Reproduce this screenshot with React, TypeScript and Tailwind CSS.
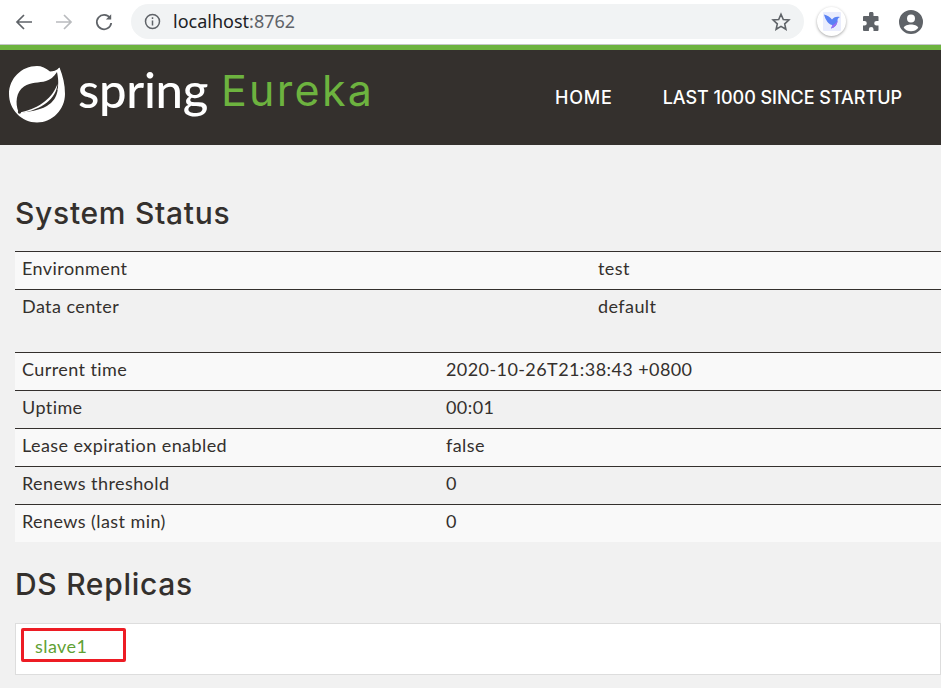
import React from "react";

const body = { fontFamily: '"Lato", "Noto Sans", sans-serif' };
const head = { fontFamily: 'Inter, "Noto Sans", sans-serif' };

function Row({ a, b, shaded, col }: { a: string; b: string; shaded?: boolean; col: string }) {
  return (
    <div className={`flex h-[38px] items-center border-t border-[#34302d] pb-[4px] ${shaded ? "bg-[#f9f9f9]" : ""}`}>
      <div className={`pl-[7px] ${col}`}>{a}</div>
      <div>{b}</div>
    </div>
  );
}

function Leaf() {
  return (
    <svg width="58" height="58" viewBox="8 8 58 58" className="shrink-0">
      <path
        d="M37 9C21.500 9 9 21.500 9 37s12.500 28.500 28 28.500S65 52.500 65 37c0-9.500-2-18-5.500-26.500-3 3-6.500 4-9.500 4C46 11 41.500 9 37 9Z"
        fill="#fff"
      />
      <path
        d="M18.500 55C15 46 16 35 24 29.500c7-4.500 15-3.500 22-5.500 4-1.200 8-4 11-9 2 9 2 19-2 26-5 8-14 13-34.500 14.500Z"
        fill="#34302d"
      />
      <path d="M20 55.500C36 52 51 44 57.500 27c-1.500 15-15 25-37 29.500Z" fill="#fff" />
      <path d="M59.500 11c1.500 6 1.800 12 0 22l-2 0c2-8 2-14 .5-21Z" fill="#fff" />
      <circle cx="19.500" cy="55" r="1.700" fill="#34302d" />
    </svg>
  );
}

export default function App() {
  return (
    <div className="relative flex h-[688px] w-[941px] flex-col overflow-hidden bg-[#f1f1f1] text-[#34302d]" style={body}>
      <div className="flex h-[45px] shrink-0 items-center border-b border-[#c4c6c8] bg-white pb-[1px]">
        <div className="ml-[14px] flex items-center gap-[20px]">
          <svg width="20" height="20" viewBox="0 0 20 20" fill="none" stroke="#5f6368" strokeWidth="1.7">
            <path d="M18 10H3M10 3l-7 7 7 7" />
          </svg>
          <svg width="20" height="20" viewBox="0 0 20 20" fill="none" stroke="#b9bbbe" strokeWidth="1.7">
            <path d="M2 10h15M10 3l7 7-7 7" />
          </svg>
          <svg width="20" height="20" viewBox="0 0 20 20" fill="none" stroke="#5f6368" strokeWidth="1.8">
            <path d="M16 6a7.200 7.200 0 1 0 1.200 5" />
            <path d="M17.200 2.200v5.300h-5.300z" fill="#5f6368" stroke="none" />
          </svg>
        </div>
        <div className="ml-[17px] flex h-[35px] w-[673px] items-center rounded-full bg-[#f1f3f4] pl-[13px] pr-[13px]">
          <svg width="17" height="17" viewBox="0 0 17 17" fill="none" stroke="#5f6368" strokeWidth="1.500">
            <circle cx="8.500" cy="8.500" r="7" />
            <path d="M8.500 7.500v5M8.500 4.200v1.800" />
          </svg>
          <div className="ml-[12px] text-[18px] text-[#202124]" style={{ fontFamily: '"Noto Sans", sans-serif' }}>
            localhost<span className="text-[#5f6368]">:8762</span>
          </div>
          <svg className="ml-auto" width="20" height="20" viewBox="0 0 20 20" fill="none" stroke="#5f6368" strokeWidth="1.600">
            <path d="M10 2.300l2.300 5.200 5.600.5-4.200 3.800 1.200 5.500L10 14.400l-4.900 2.900 1.200-5.500L2.100 8l5.600-.5z" />
          </svg>
        </div>
        <div className="ml-[13px] flex h-[29px] w-[29px] items-center justify-center rounded-full bg-white shadow-[0_1px_3px_rgba(0,0,0,0.35)]">
          <svg width="20" height="21" viewBox="0 0 20 21">
            <rect x="1" y="1" width="18" height="19" rx="1" fill="#eaedfd" />
            <path d="M2 3.500c3 .5 6 2.500 8 5 1.500-2 4-3.500 8-2.500-2 1-2.500 2-2.500 3.500 0 4-2.500 7-6.500 8l1.500-3.500C6.500 13.500 3.500 9 2 3.500Z" fill="#5a82f4" />
            <path d="M9 17.500c3.500-1 6.500-4 6.500-8-1.500 2.500-3 4-5 4.500Z" fill="#9b6df2" />
          </svg>
        </div>
        <svg className="ml-[15px]" width="20" height="20" viewBox="0 0 20 20" fill="#5f6368">
          <path d="M8 1.500a2.300 2.300 0 0 1 4.500 0V4h4a1 1 0 0 1 1 1v4h-2a2.300 2.300 0 0 0 0 4.600h2V18a1 1 0 0 1-1 1h-4v-1.800a2.300 2.300 0 0 0-4.600 0V19H3a1 1 0 0 1-1-1v-4.500h1.500a2.300 2.300 0 0 0 0-4.600H2V5a1 1 0 0 1 1-1h5z" />
        </svg>
        <svg className="ml-[18px]" width="24" height="24" viewBox="0 0 24 24" fill="#5f6368">
          <path d="M12 0a12 12 0 1 0 0 24 12 12 0 0 0 0-24Zm0 4.500a4 4 0 1 1 0 8 4 4 0 0 1 0-8Zm0 16.800a9.300 9.300 0 0 1-7.300-3.500c.8-2 4.300-3.200 7.300-3.200s6.500 1.200 7.300 3.200a9.300 9.300 0 0 1-7.300 3.500Z" />
        </svg>
      </div>

      <div className="flex h-[100px] shrink-0 items-center border-t-[5px] border-[#6db33f] bg-[#34302d] text-white">
        <div className="mb-[8px] ml-[8px] flex items-center">
          <Leaf />
          <span className="mb-[8px] ml-[12px] text-[49px] leading-none font-medium tracking-[-0.3px]" style={{ fontFamily: '"Lato", sans-serif' }}>
            spring
          </span>
          <span className="mb-[6px] ml-[13px] text-[43px] leading-none tracking-[2.300px] text-[#6db33f]" style={head}>
            Eureka
          </span>
        </div>
        <div className="ml-auto mr-[39px] flex gap-[50px] text-[18px] font-medium" style={head}>
          <span className="tracking-[0.8px]">HOME</span>
          <span className="tracking-[-0.03px]">LAST 1000 SINCE STARTUP</span>
        </div>
      </div>

      <div className="pl-[15px] text-[18px] tracking-[0.42px]">
        <div className="mt-[49px] text-[30px] leading-[38px] font-medium tracking-[0.7px]" style={head}>
          System Status
        </div>
        <div className="mt-[19px]">
          <Row a="Environment" b="test" shaded col="w-[583px]" />
          <Row a="Data center" b="default" col="w-[583px]" />
        </div>
        <div className="mt-[25px]">
          <Row a="Current time" b="2020-10-26T21:38:43 +0800" shaded col="w-[431px]" />
          <Row a="Uptime" b="00:01" col="w-[431px]" />
          <Row a="Lease expiration enabled" b="false" shaded col="w-[431px]" />
          <Row a="Renews threshold" b="0" col="w-[431px]" />
          <Row a="Renews (last min)" b="0" shaded col="w-[431px]" />
        </div>
        <div className="mt-[23px] text-[30px] leading-[38px] font-medium tracking-[0.7px]" style={head}>
          DS Replicas
        </div>
        <div className="mt-[20px] flex h-[52px] items-center border border-[#dddddd] bg-white pb-[6px] pl-[19px] text-[#5fa134]">
          slave1
        </div>
      </div>
      <div className="absolute left-[21px] top-[628px] h-[34px] w-[105px] rounded-[2px] border-[3px] border-[#ed1c24]" />
    </div>
  );
}
